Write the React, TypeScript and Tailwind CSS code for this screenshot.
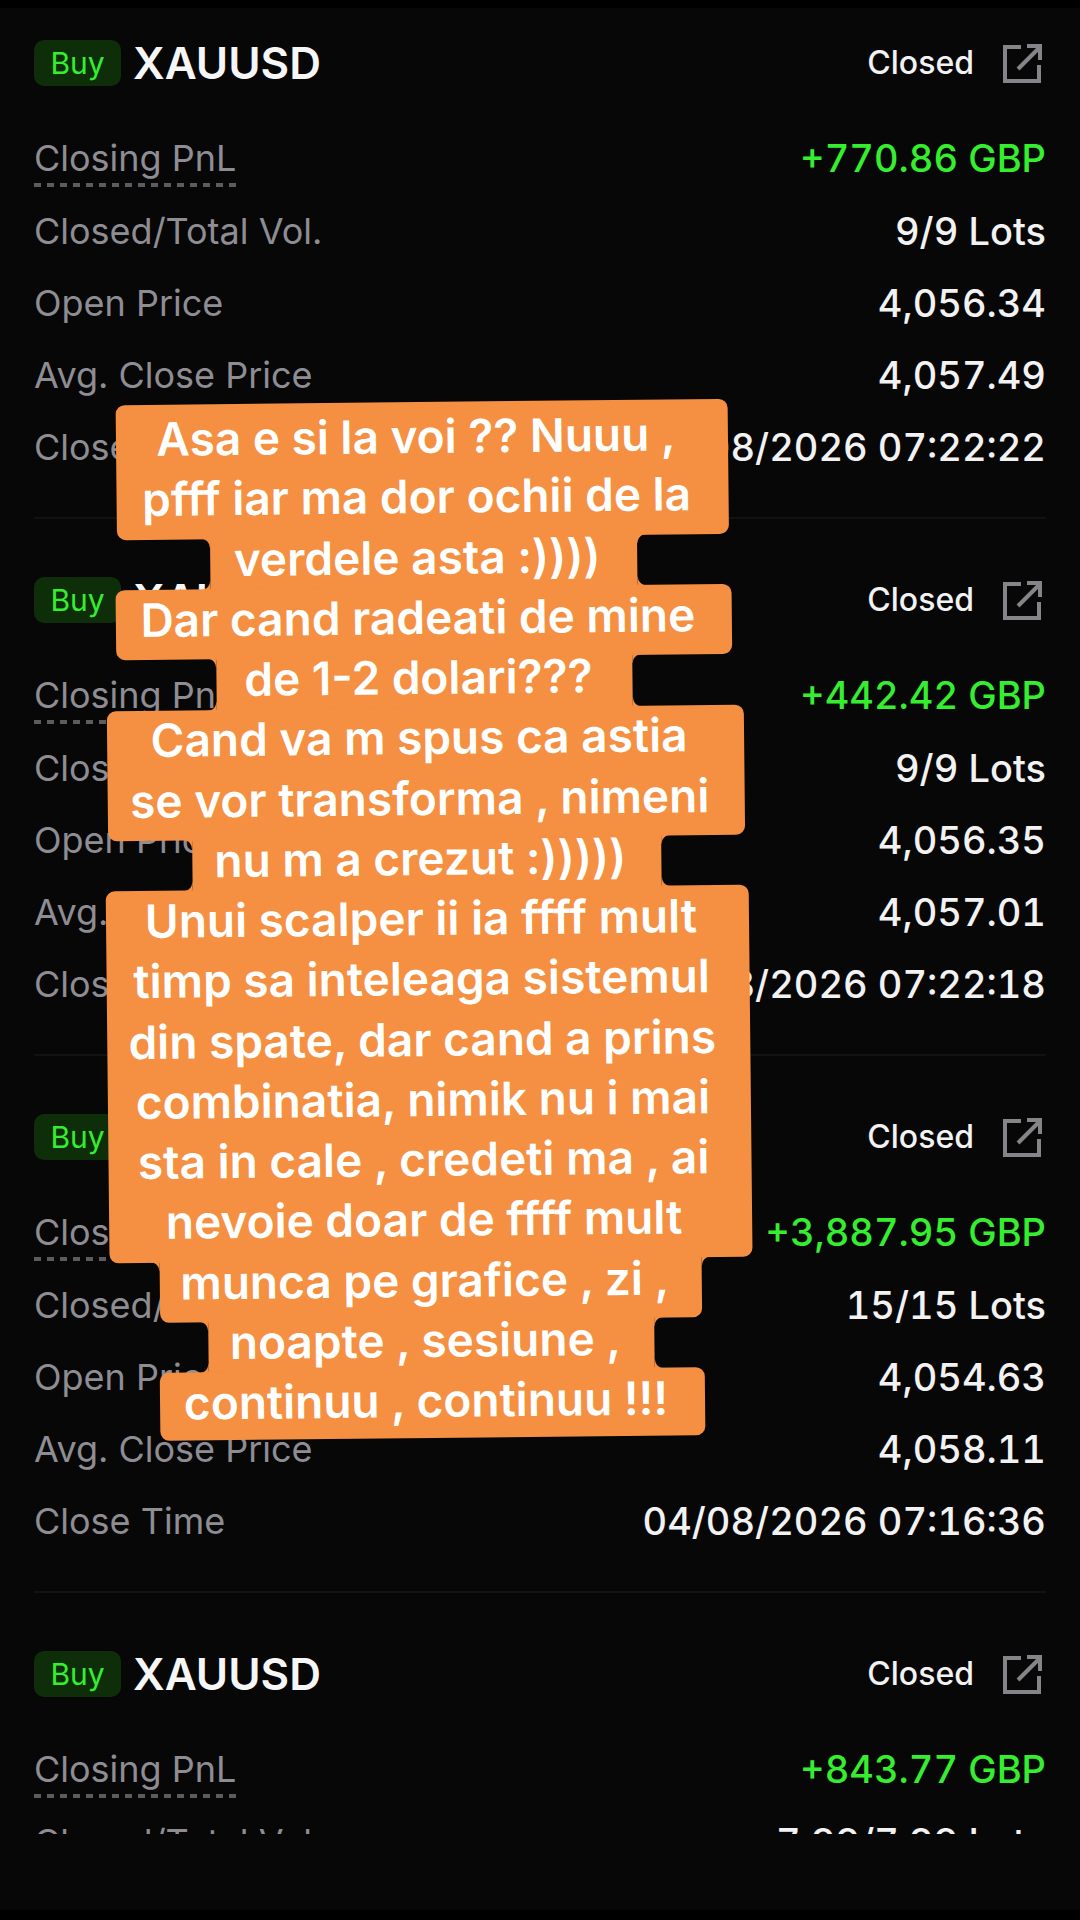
import { clsx } from "clsx";

interface Trade {
    symbol: string;
    pnl: string;
    volume: string;
    openPrice: string;
    closePrice: string;
    closeTime: string;
}

const trades: Trade[] = [
    {
        symbol: "XAUUSD",
        pnl: "+770.86 GBP",
        volume: "9/9 Lots",
        openPrice: "4,056.34",
        closePrice: "4,057.49",
        closeTime: "04/08/2026 07:22:22",
    },
    {
        symbol: "XAUUSD",
        pnl: "+442.42 GBP",
        volume: "9/9 Lots",
        openPrice: "4,056.35",
        closePrice: "4,057.01",
        closeTime: "04/08/2026 07:22:18",
    },
    {
        symbol: "XAUUSD",
        pnl: "+3,887.95 GBP",
        volume: "15/15 Lots",
        openPrice: "4,054.63",
        closePrice: "4,058.11",
        closeTime: "04/08/2026 07:16:36",
    },
    {
        symbol: "XAUUSD",
        pnl: "+843.77 GBP",
        volume: "7.99/7.99 Lots",
        openPrice: "4,054.60",
        closePrice: "4,058.12",
        closeTime: "04/08/2026 07:16:30",
    },
];

function ShareIcon() {
    return (
        <svg viewBox="0 0 40 40" className="size-10" fill="none" stroke="currentColor" strokeWidth="4">
            <path d="M19 4H3V38H37V22" />
            <path d="M16 26L37 5" />
            <path d="M25 3H38V17" />
        </svg>
    );
}

function Row({ label, value }: { label: string; value: string }) {
    return (
        <div className="flex h-[72px] items-center justify-between">
            <dt className="text-[36px] text-[#8e8d93]">{label}</dt>
            <dd className="text-[38px] font-medium text-[#f2f2f2] tabular-nums">{value}</dd>
        </div>
    );
}

function TradeCard({ trade }: { trade: Trade }) {
    return (
        <article className="h-[537px] shrink-0 border-b-2 border-[#121212] pt-[54px]">
            <header className="flex h-[54px] items-center">
                <span className="flex h-[46px] w-[87px] items-center justify-center rounded-[10px] bg-[#0e2e0a] text-[30px] text-[#36ee30]">
                    Buy
                </span>
                <h2 className="ml-3 flex-1 text-[44px] font-semibold text-[#f6f6f6]">{trade.symbol}</h2>
                <span className="text-[32px] font-medium text-[#f2f2f2]">Closed</span>
                <button type="button" aria-label="Share" className="mr-1 ml-7 text-[#858488]">
                    <ShareIcon />
                </button>
            </header>
            <dl className="pt-[31px]">
                <div className="flex h-[74px] items-center justify-between">
                    <dt className="relative text-[36px] leading-[50px] text-[#8e8d93]">
                        Closing PnL
                        <span className="absolute inset-x-0 top-full h-1 bg-[repeating-linear-gradient(90deg,#5c5b60_0_7px,transparent_7px_13px)]" />
                    </dt>
                    <dd className="text-[38px] font-medium text-[#36ee30] tabular-nums">{trade.pnl}</dd>
                </div>
                <Row label="Closed/Total Vol." value={trade.volume} />
                <Row label="Open Price" value={trade.openPrice} />
                <Row label="Avg. Close Price" value={trade.closePrice} />
                <Row label="Close Time" value={trade.closeTime} />
            </dl>
        </article>
    );
}

const noteLines = [
    "Asa e si la voi ?? Nuuu ,",
    "pfff iar ma dor ochii de la",
    "verdele asta :))))",
    "Dar cand radeati de mine",
    "de 1-2 dolari???",
    "Cand va m spus ca astia",
    "se vor transforma , nimeni",
    "nu m a crezut :)))))",
    "Unui scalper ii ia ffff mult",
    "timp sa inteleaga sistemul",
    "din spate, dar cand a prins",
    "combinatia, nimik nu i mai",
    "sta in cale , credeti ma , ai",
    "nevoie doar de ffff mult",
    "munca pe grafice , zi ,",
    "noapte , sesiune ,",
    "continuu , continuu !!!",
];

// one block per run of lines that share a width
const noteBlocks = [
    { size: "h-[135px] w-[612px]", corners: "rounded-[9px]" },
    { size: "h-[50px] w-[427px]", notchTop: true, notchBottom: true },
    { size: "h-[70px] w-[616px]", corners: "rounded-[9px]" },
    { size: "h-[51px] w-[416px]", notchTop: true, notchBottom: true },
    { size: "h-[130px] w-[637px]", corners: "rounded-[9px]" },
    { size: "h-[50px] w-[469px]", notchTop: true, notchBottom: true },
    { size: "h-[372px] w-[643px]", corners: "rounded-[9px]" },
    { size: "h-[60px] w-[542px]", corners: "rounded-b-[9px]", notchTop: true },
    { size: "h-[50px] w-[446px]", notchTop: true, notchBottom: true },
    { size: "h-[68px] w-[545px]", corners: "rounded-[9px]" },
];

function Note() {
    return (
        <aside className="absolute top-[402px] left-[105px] grid w-[644px] -rotate-[0.6deg]">
            <div className="flex flex-col items-center [grid-area:1/1]">
                {noteBlocks.map(({ size, corners, notchTop, notchBottom }, i) => (
                    <div key={i} className={clsx("relative bg-[#f58f41]", size, corners)}>
                        {notchTop && (
                            <>
                                <i className="absolute -top-px right-full size-[9px] bg-[radial-gradient(circle_at_0_100%,transparent_8px,#f58f41_9px)]" />
                                <i className="absolute -top-px left-full size-[9px] bg-[radial-gradient(circle_at_100%_100%,transparent_8px,#f58f41_9px)]" />
                                <i className="absolute inset-x-0 -top-px h-0.5 bg-[#f58f41]" />
                            </>
                        )}
                        {notchBottom && (
                            <>
                                <i className="absolute right-full -bottom-px size-[9px] bg-[radial-gradient(circle_at_0_0,transparent_8px,#f58f41_9px)]" />
                                <i className="absolute -bottom-px left-full size-[9px] bg-[radial-gradient(circle_at_100%_0,transparent_8px,#f58f41_9px)]" />
                                <i className="absolute inset-x-0 -bottom-px h-0.5 bg-[#f58f41]" />
                            </>
                        )}
                    </div>
                ))}
            </div>
            <p className="relative flex flex-col items-center justify-between pt-1 pr-3 pb-2 text-[46px] leading-[60px] font-semibold whitespace-nowrap text-white [grid-area:1/1]">
                {noteLines.map((line) => (
                    <span key={line}>{line}</span>
                ))}
            </p>
        </aside>
    );
}

export default function App() {
    return (
        <div className="relative flex h-screen flex-col overflow-hidden bg-black pt-2 pb-[10px] font-['Inter','Liberation_Sans',sans-serif]">
            <main className="flex min-h-0 flex-1 flex-col bg-[#070707] px-[34px] pb-[76px]">
                <section className="-mt-[26px] flex min-h-0 flex-1 flex-col overflow-hidden">
                    {trades.map((trade) => (
                        <TradeCard key={trade.pnl} trade={trade} />
                    ))}
                </section>
            </main>
            <Note />
        </div>
    );
}
